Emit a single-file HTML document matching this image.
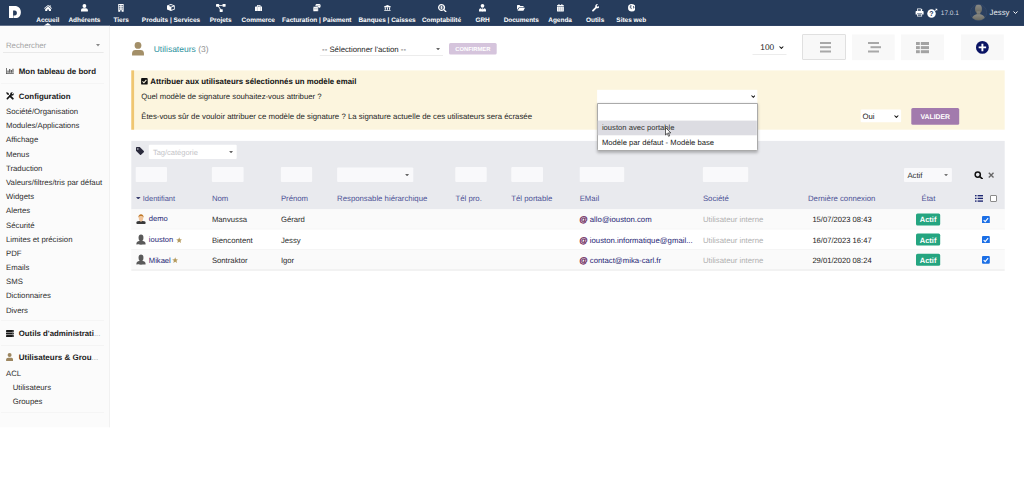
<!DOCTYPE html>
<html lang="fr"><head><meta charset="utf-8"><title>Utilisateurs</title>
<style>
html,body{margin:0;padding:0;background:#fff;}
body{text-rendering:geometricPrecision;width:1024px;height:484px;position:relative;overflow:hidden;font-family:"Liberation Sans",sans-serif;}
.t{position:absolute;white-space:pre;line-height:10px;}
.b{position:absolute;display:block;}
</style></head><body>
<svg class="b" style="left:0px;top:0px" width="1024" height="26"><rect x="0.00" y="0.00" width="1024.00" height="25.75" fill="#263c5c"/></svg>
<svg class="b" style="left:0px;top:24px" width="1024" height="2"><rect x="0.00" y="0.75" width="1024.00" height="1.00" fill="#22365a"/></svg>
<svg class="b" style="left:9.06px;top:5.90px;" width="11.9" height="12.4" viewBox="0 0 11.900 12.400"><path fill="#fff" fill-rule="evenodd" d="M0 0h5.700C9.500 0 11.900 2.500 11.900 6.200S9.500 12.400 5.700 12.400H4.500V9.400H4.100V12.400H0zM4.100 4.400V9.400H5.700C7.200 9.400 7.900 8.300 7.900 6.900S7.200 4.400 5.700 4.400z"/></svg>
<span class="t" style="left:47.75px;transform:translateX(-50%);top:16px;font-size:6.47px;color:#fff;font-weight:bold;">Accueil</span>
<svg class="b" style="left:43.75px;top:5.00px" width="8.15" height="6.30" viewBox="0 0 18 14" preserveAspectRatio="none"><g fill="#fff"><path d="M9 0 0 7.400l1 1.200L9 2.100l8 6.500 1-1.200L14.600 4.600V.8h-2.200v2z"/><path d="M9 3.600 2.600 8.800V14h4.600v-4.200h3.600V14h4.600V8.800z"/></g></svg>
<span class="t" style="left:84.40px;transform:translateX(-50%);top:16px;font-size:6.47px;color:#fff;font-weight:bold;">Adhérents</span>
<svg class="b" style="left:80.90px;top:4.40px" width="6.85" height="7.50" viewBox="0 0 14 15" preserveAspectRatio="none"><g fill="#fff"><circle cx="7" cy="3.900" r="3.900"/><path d="M0 15v-2.400c0-2.500 1.900-4 3.900-4h6.200c2 0 3.900 1.500 3.900 4V15z"/></g></svg>
<span class="t" style="left:121.10px;transform:translateX(-50%);top:16px;font-size:6.47px;color:#fff;font-weight:bold;">Tiers</span>
<svg class="b" style="left:118.10px;top:4.10px" width="5.90" height="7.80" viewBox="0 0 12 16" preserveAspectRatio="none"><g fill="#fff"><path d="M.5 0h11v16h-4v-3h-3v3h-4z"/><g fill="#263c5c"><rect x="2.500" y="2" width="2.200" height="2.200"/><rect x="7.300" y="2" width="2.200" height="2.200"/><rect x="2.500" y="5.600" width="2.200" height="2.200"/><rect x="7.300" y="5.600" width="2.200" height="2.200"/><rect x="2.500" y="9.200" width="2.200" height="2.200"/><rect x="7.300" y="9.200" width="2.200" height="2.200"/></g></g></svg>
<span class="t" style="left:171.00px;transform:translateX(-50%);top:16px;font-size:6.47px;color:#fff;font-weight:bold;">Produits | Services</span>
<svg class="b" style="left:167.25px;top:4.40px" width="7.75" height="6.90" viewBox="0 0 16 14" preserveAspectRatio="none"><g fill="#fff"><path d="M8 0 0 2.800v8.400L8 14l8-2.800V2.800z"/><path fill="#263c5c" d="M8 1.800 3 3.600 8 5.400l5-1.800zM8.900 6.900v5l5.300-1.900V5z"/></g></svg>
<span class="t" style="left:220.60px;transform:translateX(-50%);top:16px;font-size:6.47px;color:#fff;font-weight:bold;">Projets</span>
<svg class="b" style="left:216.00px;top:4.00px" width="9.60" height="7.90" viewBox="0 0 20 16" preserveAspectRatio="none"><g fill="#fff"><rect x="0" y="0" width="6.400" height="5.400" rx=".8"/><rect x="13.600" y="0" width="6.400" height="5.400" rx=".8"/><rect x="7.600" y="10.600" width="6.400" height="5.400" rx=".8"/><path d="M6 2h8v1.600H6z"/><path d="M4 4.600 5.500 3.800 10.600 11.400 9.100 12.200z"/></g></svg>
<span class="t" style="left:258.25px;transform:translateX(-50%);top:16px;font-size:6.47px;color:#fff;font-weight:bold;">Commerce</span>
<svg class="b" style="left:254.75px;top:4.75px" width="7.50" height="6.55" viewBox="0 0 16 14" preserveAspectRatio="none"><g fill="#fff"><path d="M5.500 0h5a1.300 1.300 0 0 1 1.300 1.300V3h2.700A1.500 1.500 0 0 1 16 4.500v8a1.500 1.500 0 0 1-1.500 1.500h-13A1.500 1.500 0 0 1 0 12.500v-8A1.500 1.500 0 0 1 1.500 3h2.700V1.300A1.300 1.300 0 0 1 5.500 0zm.4 1.600V3h4.200V1.600z"/><path fill="#263c5c" opacity=".45" d="M4.200 3h.9v11h-.9zM10.900 3h.9v11h-.9z"/></g></svg>
<span class="t" style="left:316.80px;transform:translateX(-50%);top:16px;font-size:6.47px;color:#fff;font-weight:bold;">Facturation | Paiement</span>
<svg class="b" style="left:313.10px;top:4.40px" width="7.50" height="7.50" viewBox="0 0 16 16" preserveAspectRatio="none"><g fill="#fff"><rect x="5.500" y="0" width="10.500" height="8" rx="2.500"/><rect x="0" y="5.500" width="11.500" height="10.500" rx="2.500" stroke="#263c5c" stroke-width="1.200"/><path fill="#263c5c" opacity=".5" d="M1.500 9.300h8.500v1H1.500zM1.500 12h8.500v1H1.500zM7 2.600h8v.9H7z"/></g></svg>
<span class="t" style="left:387.00px;transform:translateX(-50%);top:16px;font-size:6.47px;color:#fff;font-weight:bold;">Banques | Caisses</span>
<svg class="b" style="left:383.75px;top:5.00px" width="6.85" height="6.30" viewBox="0 0 16 14" preserveAspectRatio="none"><g fill="#fff"><path d="M8 0 0 3.300v1.500h16V3.300zM1.800 5.600h2.400v5H1.800zM6.800 5.600h2.400v5H6.800zM11.800 5.600h2.400v5h-2.400zM.8 11.200h14.400v1.200H.8zM0 12.800h16V14H0z"/></g></svg>
<span class="t" style="left:441.50px;transform:translateX(-50%);top:16px;font-size:6.47px;color:#fff;font-weight:bold;">Comptabilité</span>
<svg class="b" style="left:437.50px;top:3.75px" width="9.00" height="8.50" viewBox="0 0 18 17" preserveAspectRatio="none"><g fill="#fff"><path d="M7 0a7 7 0 1 0 4.100 12.700l4.300 4.300 1.900-1.900-4.300-4.300A7 7 0 0 0 7 0zm0 2.600a4.400 4.400 0 1 1 0 8.800A4.400 4.400 0 0 1 7 2.600z"/><path d="M6.400 3.300h1.200v7.400H6.400z"/><path d="M5.200 4.600h3.600v1.200H5.200zM5.200 8.200h3.600v1.200H5.200zM5.200 4.600h1.200v3.400H5.200zM7.600 6.200h1.200v3.200H7.600zM5.200 6.400h3.600v1.200H5.200z"/></g></svg>
<span class="t" style="left:482.60px;transform:translateX(-50%);top:16px;font-size:6.47px;color:#fff;font-weight:bold;">GRH</span>
<svg class="b" style="left:479.00px;top:4.40px" width="7.00" height="7.50" viewBox="0 0 14 15" preserveAspectRatio="none"><g fill="#fff"><circle cx="7" cy="3.700" r="3.700"/><path d="M0 15v-2.300c0-2.400 1.700-4 3.800-4.100L7 12l3.200-3.400c2.100.1 3.800 1.700 3.800 4.100V15z"/><path d="M6 8.600h2l-.4 1.500.9 3.400L7 14.800l-1.500-1.300.9-3.400z"/></g></svg>
<span class="t" style="left:521.25px;transform:translateX(-50%);top:16px;font-size:6.47px;color:#fff;font-weight:bold;">Documents</span>
<svg class="b" style="left:517.25px;top:5.25px" width="8.00" height="5.75" viewBox="0 0 18 13" preserveAspectRatio="none"><g fill="#fff"><path d="M0 1.500A1.500 1.500 0 0 1 1.500 0h4l2 2h6A1.500 1.500 0 0 1 15 3.500V5H5.200a2 2 0 0 0-1.700 1L0 11.500z"/><path d="M5.300 6H18l-3.300 6.200a1.500 1.500 0 0 1-1.300.8H1z"/></g></svg>
<span class="t" style="left:560.10px;transform:translateX(-50%);top:16px;font-size:6.47px;color:#fff;font-weight:bold;">Agenda</span>
<svg class="b" style="left:556.90px;top:4.40px" width="6.85" height="7.50" viewBox="0 0 14 16" preserveAspectRatio="none"><g fill="#fff"><path d="M0 3.300A1.300 1.300 0 0 1 1.300 2h11.400A1.300 1.300 0 0 1 14 3.300V5H0zM0 6h14v8.700a1.300 1.300 0 0 1-1.300 1.300H1.300A1.300 1.300 0 0 1 0 14.700z"/><rect x="3" y="0" width="2" height="3.600" rx=".6"/><rect x="9" y="0" width="2" height="3.600" rx=".6"/><g fill="#263c5c" opacity=".35"><rect x="2" y="7.400" width="2.600" height="2.600"/><rect x="5.700" y="7.400" width="2.600" height="2.600"/><rect x="9.400" y="7.400" width="2.600" height="2.600"/><rect x="2" y="11.400" width="2.600" height="2.600"/><rect x="5.700" y="11.400" width="2.600" height="2.600"/><rect x="9.400" y="11.400" width="2.600" height="2.600"/></g></g></svg>
<span class="t" style="left:595.10px;transform:translateX(-50%);top:16px;font-size:6.47px;color:#fff;font-weight:bold;">Outils</span>
<svg class="b" style="left:591.90px;top:4.40px" width="7.50" height="7.50" viewBox="0 0 16 16" preserveAspectRatio="none"><g fill="#fff"><path d="M16 4.600a4.600 4.600 0 0 1-6.200 4.300l-6.400 6.400a1.900 1.900 0 0 1-2.700-2.700l6.400-6.400A4.600 4.600 0 0 1 12.800.3L10.100 3l.5 2.400 2.400.5 2.700-2.700c.2.400.3.900.3 1.400z"/></g></svg>
<span class="t" style="left:631.25px;transform:translateX(-50%);top:16px;font-size:6.47px;color:#fff;font-weight:bold;">Sites web</span>
<svg class="b" style="left:627.75px;top:4.40px" width="7.50" height="7.50" viewBox="0 0 16 16" preserveAspectRatio="none"><g fill="#fff"><circle cx="8" cy="8" r="8"/><path fill="#263c5c" opacity=".85" d="M4.500 3.300 6.500 2.600l1.500 1.100-.7 1.400-1.600.3-.5 1.300 1.800.5 1 1.700-.8 2.500-1.500-1.700-.9-1.100-1.400-1.800zM10.800 4.500l1.900.4 1.100 1.900-.9 2.300-1.700.4-.5-1.600.9-1.200-1.100-.7z"/></g></svg>
<svg class="b" style="left:43.70px;top:23.30px;" width="7.6" height="2.6" viewBox="0 0 15.200 5.200"><path fill="#fbfbfb" d="M0 5.200 7.600 0l7.600 5.200z"/></svg>
<svg class="b" style="left:914.60px;top:8.00px;" width="9.2" height="9" viewBox="0 0 18 18"><g fill="#fff"><path d="M4 1h8l2 2v4H4z"/><path d="M1 7.500a1.500 1.500 0 0 1 1.500-1.500h13A1.500 1.500 0 0 1 17 7.500V13h-3v-2H4v2H1z"/><path d="M4 12h10v5H4z"/></g><path fill="#263c5c" d="M5.500 2.500h6v3h-6zM5.500 13.200h7v2.400h-7z"/></svg>
<svg class="b" style="left:927.00px;top:7.60px;" width="10.5" height="10" viewBox="0 0 21 20"><circle cx="9" cy="11" r="8.500" fill="#fff"/><path fill="#fff" d="M16.500 1.500h4v4l-1.300-1.300-1.700 1.700-1.400-1.400 1.700-1.700z"/><text x="9" y="16" font-family="Liberation Sans" font-weight="bold" font-size="14" text-anchor="middle" fill="#263c5c">?</text></svg>
<span class="t" style="left:940.80px;top:9px;font-size:6.5px;color:#d3d8e0;">17.0.1</span>
<svg class="b" style="left:970.00px;top:4.20px;" width="17" height="17" viewBox="0 0 34 34"><defs><clipPath id="av"><circle cx="17" cy="17" r="16.500"/></clipPath><linearGradient id="avg" x1="0" y1="0" x2="0" y2="1"><stop offset="0" stop-color="#8b8b86"/><stop offset="1" stop-color="#6a695f"/></linearGradient></defs><circle cx="17" cy="17" r="16.500" fill="#2a3f5f"/><g clip-path="url(#av)" fill="url(#avg)"><ellipse cx="17" cy="9.800" rx="6.800" ry="8.600"/><path d="M13.500 15h7v6.500h-7z"/><path d="M3 33c0-7.500 5-11 10.500-12.500h7C26 22 31 25.500 31 33z"/></g><circle cx="17" cy="17" r="16.300" fill="none" stroke="#435573" stroke-width="0.800"/></svg>
<span class="t" style="left:989.60px;top:8px;font-size:7.78px;color:#e8ebf0;">Jessy</span>
<svg class="b" style="left:1013.00px;top:11.00px;" width="5" height="3.2" viewBox="0 0 10 6.400"><path d="M1 1l4 4 4-4" fill="none" stroke="#fff" stroke-width="2"/></svg>
<svg class="b" style="left:0px;top:25px" width="110" height="403"><rect x="0.00" y="0.75" width="109.70" height="401.55" fill="#fbfbfb"/></svg>
<svg class="b" style="left:109px;top:25px" width="1" height="403"><rect x="0.10" y="0.75" width="0.70" height="401.55" fill="#ececec"/></svg>
<span class="t" style="left:6.00px;top:41px;font-size:7.78px;color:#a4a4a4;">Rechercher</span>
<svg class="b" style="left:95.50px;top:44.30px;" width="4" height="2.4" viewBox="0 0 8 4.800"><path d="M0 0h8L4 4.800z" fill="#888"/></svg>
<svg class="b" style="left:3px;top:52px" width="101" height="1"><rect x="0.00" y="0.10" width="100.60" height="0.60" fill="#dedede"/></svg>
<svg class="b" style="left:6.00px;top:68.10px;" width="7.8" height="6" viewBox="0 0 16 12"><path fill="#555" d="M0 0h1.600v10.400H16V12H0z"/><path fill="#555" d="M3 5h2.400v4.600H3zM6.400 2h2.400v7.600H6.400zM9.800 4h2.400v5.600H9.800zM13.200 1.500h2.200v8.100h-2.200z"/></svg>
<span class="t" style="left:18.80px;top:67px;font-size:7.9px;color:#1a1a1a;font-weight:bold;">Mon tableau de bord</span>
<svg class="b" style="left:1px;top:83px" width="103" height="2"><rect x="0.00" y="0.35" width="103.00" height="0.70" fill="#f1f1f1"/></svg>
<svg class="b" style="left:6.00px;top:91.90px;" width="8" height="7.9" viewBox="0 0 16 16"><g stroke="#161616" stroke-linecap="round" fill="none"><path d="M2.600 13.400 10.800 5.200" stroke-width="3.200"/><path d="M9.300 9.300 13.600 13.600" stroke-width="3.800"/><path d="M2.200 2.200 8.500 8.500" stroke-width="1.500"/></g><g fill="#161616"><circle cx="12" cy="4" r="3.700"/><path d="M0.300 1.700 1.700.3l3.400 1.900.5 2.100-1.400 1.400-2.100-.5z"/></g><path d="M12.400 3.600 16.500-.5" stroke="#fbfbfb" stroke-width="2.200"/></svg>
<span class="t" style="left:18.80px;top:92px;font-size:7.9px;color:#1a1a1a;font-weight:bold;">Configuration</span>
<span class="t" style="left:6.00px;top:107px;font-size:7.78px;color:#2e2e2e;">Société/Organisation</span>
<span class="t" style="left:6.00px;top:121px;font-size:7.78px;color:#2e2e2e;">Modules/Applications</span>
<span class="t" style="left:6.00px;top:135px;font-size:7.78px;color:#2e2e2e;">Affichage</span>
<span class="t" style="left:6.00px;top:150px;font-size:7.78px;color:#2e2e2e;">Menus</span>
<span class="t" style="left:6.00px;top:164px;font-size:7.78px;color:#2e2e2e;">Traduction</span>
<span class="t" style="left:6.00px;top:178px;font-size:7.78px;color:#2e2e2e;">Valeurs/filtres/tris par défaut</span>
<span class="t" style="left:6.00px;top:192px;font-size:7.78px;color:#2e2e2e;">Widgets</span>
<span class="t" style="left:6.00px;top:206px;font-size:7.78px;color:#2e2e2e;">Alertes</span>
<span class="t" style="left:6.00px;top:221px;font-size:7.78px;color:#2e2e2e;">Sécurité</span>
<span class="t" style="left:6.00px;top:235px;font-size:7.78px;color:#2e2e2e;">Limites et précision</span>
<span class="t" style="left:6.00px;top:249px;font-size:7.78px;color:#2e2e2e;">PDF</span>
<span class="t" style="left:6.00px;top:263px;font-size:7.78px;color:#2e2e2e;">Emails</span>
<span class="t" style="left:6.00px;top:277px;font-size:7.78px;color:#2e2e2e;">SMS</span>
<span class="t" style="left:6.00px;top:291px;font-size:7.78px;color:#2e2e2e;">Dictionnaires</span>
<span class="t" style="left:6.00px;top:306px;font-size:7.78px;color:#2e2e2e;">Divers</span>
<svg class="b" style="left:1px;top:320px" width="103" height="2"><rect x="0.00" y="0.35" width="103.00" height="0.70" fill="#f1f1f1"/></svg>
<svg class="b" style="left:6.00px;top:329.50px;" width="7.8" height="7" viewBox="0 0 16 14"><g fill="#1a1a1a"><rect x="0" y="0" width="16" height="3.800" rx=".8"/><rect x="0" y="5.100" width="16" height="3.800" rx=".8"/><rect x="0" y="10.200" width="16" height="3.800" rx=".8"/></g><g fill="#fbfbfb"><circle cx="13.500" cy="1.900" r=".7"/><circle cx="13.500" cy="7" r=".7"/><circle cx="13.500" cy="12.100" r=".7"/></g></svg>
<span class="t" style="left:18.80px;top:329px;font-size:7.8px;color:#1a1a1a;font-weight:bold;">Outils d'administrati<span style='color:#aaa;font-weight:normal'>...</span></span>
<svg class="b" style="left:1px;top:345px" width="103" height="1"><rect x="0.00" y="0.15" width="103.00" height="0.70" fill="#f1f1f1"/></svg>
<svg class="b" style="left:6.30px;top:353.00px;" width="7.2" height="8" viewBox="0 0 14 16"><g fill="#9c8660"><circle cx="7" cy="4" r="4"/><path d="M0 16v-2.800C0 10.800 2 9.300 4 9.300h6c2 0 4 1.500 4 3.900V16z"/></g></svg>
<span class="t" style="left:18.70px;top:353px;font-size:8.0px;color:#1a1a1a;font-weight:bold;">Utilisateurs &amp; Grou<span style='color:#aaa;font-weight:normal'>...</span></span>
<span class="t" style="left:6.00px;top:369px;font-size:7.78px;color:#2e2e2e;">ACL</span>
<span class="t" style="left:12.65px;top:383px;font-size:7.78px;color:#2e2e2e;">Utilisateurs</span>
<span class="t" style="left:12.65px;top:397px;font-size:7.78px;color:#2e2e2e;">Groupes</span>
<svg class="b" style="left:1px;top:411px" width="103" height="2"><rect x="0.00" y="0.95" width="103.00" height="0.70" fill="#f1f1f1"/></svg>
<svg class="b" style="left:131.70px;top:42.20px;" width="12" height="13.4" viewBox="0 0 24 27"><g fill="#a38f68"><circle cx="12" cy="7" r="6.800"/><path d="M0 27v-4.500c0-4 3-6.500 6.500-6.500h11c3.500 0 6.500 2.500 6.500 6.500V27z"/></g></svg>
<span class="t" style="left:153.70px;top:44px;font-size:8.53px;color:#2c929e;">Utilisateurs <span style="color:#8f8f8f">(3)</span></span>
<span class="t" style="left:322.10px;top:45px;font-size:7.78px;color:#1e1e1e;">-- Sélectionner l'action --</span>
<svg class="b" style="left:436.00px;top:47.90px;" width="4.2" height="2.4" viewBox="0 0 8 4.800"><path d="M0 0h8L4 4.800z" fill="#666"/></svg>
<svg class="b" style="left:319px;top:55px" width="124" height="1"><rect x="0.80" y="0.40" width="123.20" height="0.60" fill="#dfdfdf"/></svg>
<svg class="b" style="left:449px;top:42px" width="48" height="13"><rect x="0.00" y="0.90" width="47.70" height="11.70" rx="1.50" fill="#d5c4dc"/></svg>
<span class="t" style="left:472.85px;transform:translateX(-50%);top:45px;font-size:5.8px;color:#fff;font-weight:bold;">CONFIRMER</span>
<span class="t" style="left:760.30px;top:42px;font-size:8.3px;color:#222;">100</span>
<svg class="b" style="left:779.00px;top:45.60px;" width="4.8" height="3" viewBox="0 0 9.600 6"><path d="M1 1l3.800 3.800L8.600 1" fill="none" stroke="#111" stroke-width="2.100"/></svg>
<svg class="b" style="left:752px;top:54px" width="35" height="1"><rect x="0.50" y="0.10" width="34.00" height="0.60" fill="#e0e0e0"/></svg>
<div class="b" style="left:802.20px;top:34.20px;width:43.80px;height:26.20px;background:#f8f8f8;border:0.600px solid #e0e0e0;box-sizing:border-box;border-radius:1px"></div>
<svg class="b" style="left:820px;top:42px" width="11" height="2"><rect x="0.00" y="0.00" width="11.00" height="2.00" fill="#a8a8a8"/></svg>
<svg class="b" style="left:820px;top:46px" width="11" height="3"><rect x="0.00" y="0.20" width="11.00" height="2.00" fill="#a8a8a8"/></svg>
<svg class="b" style="left:820px;top:50px" width="11" height="3"><rect x="0.00" y="0.50" width="11.00" height="2.00" fill="#a8a8a8"/></svg>
<svg class="b" style="left:852px;top:34px" width="43" height="27"><rect x="0.00" y="0.50" width="42.70" height="25.70" fill="#f8f8f8"/></svg>
<svg class="b" style="left:868px;top:42px" width="11" height="2"><rect x="0.00" y="0.00" width="11.00" height="2.00" fill="#a8a8a8"/></svg>
<svg class="b" style="left:870px;top:46px" width="11" height="3"><rect x="0.50" y="0.20" width="10.50" height="2.00" fill="#a8a8a8"/></svg>
<svg class="b" style="left:868px;top:50px" width="11" height="3"><rect x="0.00" y="0.50" width="11.00" height="2.00" fill="#a8a8a8"/></svg>
<svg class="b" style="left:901px;top:34px" width="43" height="27"><rect x="0.00" y="0.50" width="43.00" height="25.70" fill="#f8f8f8"/></svg>
<svg class="b" style="left:916px;top:42px" width="4" height="3"><rect x="0.00" y="0.00" width="3.80" height="3.00" fill="#a3a3a3"/></svg>
<svg class="b" style="left:920px;top:42px" width="9" height="3"><rect x="0.80" y="0.00" width="8.20" height="3.00" fill="#a3a3a3"/></svg>
<svg class="b" style="left:916px;top:46px" width="4" height="4"><rect x="0.00" y="0.10" width="3.80" height="3.00" fill="#a3a3a3"/></svg>
<svg class="b" style="left:920px;top:46px" width="9" height="4"><rect x="0.80" y="0.10" width="8.20" height="3.00" fill="#a3a3a3"/></svg>
<svg class="b" style="left:916px;top:50px" width="4" height="4"><rect x="0.00" y="0.20" width="3.80" height="3.00" fill="#a3a3a3"/></svg>
<svg class="b" style="left:920px;top:50px" width="9" height="4"><rect x="0.80" y="0.20" width="8.20" height="3.00" fill="#a3a3a3"/></svg>
<svg class="b" style="left:961px;top:34px" width="43" height="27"><rect x="0.00" y="0.50" width="42.75" height="25.70" fill="#f8f8f8"/></svg>
<svg class="b" style="left:976.00px;top:41.00px;" width="12.8" height="12.8" viewBox="0 0 24 24"><circle cx="12" cy="12" r="12" fill="#0a1464"/><path fill="#fff" d="M10.200 5h3.600v5.200H19v3.600h-5.200V19h-3.600v-5.200H5v-3.600h5.200z"/></svg>
<svg class="b" style="left:131px;top:70px" width="874" height="60"><rect x="0.30" y="0.40" width="873.40" height="59.30" fill="#fcf5de"/></svg>
<svg class="b" style="left:131px;top:70px" width="4" height="60"><rect x="0.30" y="0.40" width="2.80" height="59.30" fill="#efc672"/></svg>
<svg class="b" style="left:141.20px;top:78.30px;" width="6.8" height="6.6" viewBox="0 0 14 14"><rect width="14" height="14" rx="2" fill="#111"/><path d="M3 7.200 6 10.200 11.200 4" fill="none" stroke="#fcf6e1" stroke-width="2.200"/></svg>
<span class="t" style="left:150.25px;top:77px;font-size:7.85px;color:#111;font-weight:bold;">Attribuer aux utilisateurs sélectionnés un modèle email</span>
<span class="t" style="left:141.20px;top:92px;font-size:7.78px;color:#262626;">Quel modèle de signature souhaitez-vous attribuer ?</span>
<span class="t" style="left:141.20px;top:112px;font-size:7.82px;color:#262626;">Êtes-vous sûr de vouloir attribuer ce modèle de signature ? La signature actuelle de ces utilisateurs sera écrasée</span>
<svg class="b" style="left:597px;top:89px" width="161" height="15"><rect x="0.10" y="0.80" width="160.20" height="13.60" fill="#fff"/></svg>
<svg class="b" style="left:750.60px;top:95.20px;" width="4.6" height="2.9" viewBox="0 0 9.200 5.800"><path d="M1 1l3.600 3.600L8.200 1" fill="none" stroke="#111" stroke-width="2.100"/></svg>
<svg class="b" style="left:860px;top:109px" width="42" height="14"><rect x="0.70" y="0.50" width="40.40" height="12.70" rx="1.00" fill="#fff"/></svg>
<span class="t" style="left:862.50px;top:112px;font-size:7.78px;color:#222;">Oui</span>
<svg class="b" style="left:894.00px;top:114.60px;" width="4.8" height="3" viewBox="0 0 9.600 6"><path d="M1 1l3.800 3.800L8.600 1" fill="none" stroke="#111" stroke-width="2.100"/></svg>
<svg class="b" style="left:911px;top:108px" width="49" height="17"><rect x="0.30" y="0.00" width="47.90" height="16.80" rx="1.50" fill="#a27aad"/></svg>
<span class="t" style="left:935.25px;transform:translateX(-50%);top:113px;font-size:6.86px;color:#fff;font-weight:bold;">VALIDER</span>
<svg class="b" style="left:131px;top:140px" width="874" height="70"><rect x="0.30" y="0.90" width="873.40" height="68.50" fill="#e9eaee"/></svg>
<svg class="b" style="left:136.10px;top:147.40px;" width="8" height="8.2" viewBox="0 0 16 16"><path fill="#2a2a3c" d="M0 1.500A1.500 1.500 0 0 1 1.500 0h6l8 8a1.500 1.500 0 0 1 0 2.100l-5.400 5.400a1.500 1.500 0 0 1-2.100 0L0 7.500z"/><circle cx="3.700" cy="3.700" r="1.400" fill="#e9eaef"/></svg>
<svg class="b" style="left:148px;top:144px" width="89" height="16"><rect x="0.80" y="0.80" width="87.90" height="14.30" rx="1.00" fill="#fff"/></svg>
<span class="t" style="left:152.90px;top:148px;font-size:7.5px;color:#c4c4c8;">Tag/catégorie</span>
<svg class="b" style="left:228.50px;top:151.00px;" width="4.2" height="2.4" viewBox="0 0 8 4.800"><path d="M0 0h8L4 4.800z" fill="#666"/></svg>
<svg class="b" style="left:135px;top:166px" width="32" height="16"><rect x="0.70" y="0.90" width="31.30" height="15.10" rx="1.00" fill="#f9f9fb"/></svg>
<svg class="b" style="left:211px;top:166px" width="33" height="16"><rect x="0.90" y="0.90" width="31.70" height="15.10" rx="1.00" fill="#f9f9fb"/></svg>
<svg class="b" style="left:280px;top:166px" width="33" height="16"><rect x="0.90" y="0.90" width="31.20" height="15.10" rx="1.00" fill="#f9f9fb"/></svg>
<svg class="b" style="left:455px;top:166px" width="32" height="16"><rect x="0.30" y="0.90" width="31.40" height="15.10" rx="1.00" fill="#f9f9fb"/></svg>
<svg class="b" style="left:511px;top:166px" width="32" height="16"><rect x="0.30" y="0.90" width="31.70" height="15.10" rx="1.00" fill="#f9f9fb"/></svg>
<svg class="b" style="left:579px;top:166px" width="46" height="16"><rect x="0.70" y="0.90" width="44.50" height="15.10" rx="1.00" fill="#f9f9fb"/></svg>
<svg class="b" style="left:702px;top:166px" width="47" height="16"><rect x="0.90" y="0.90" width="45.30" height="15.10" rx="1.00" fill="#f9f9fb"/></svg>
<svg class="b" style="left:337px;top:167px" width="77" height="15"><rect x="0.10" y="0.40" width="76.20" height="14.50" rx="1.00" fill="#f9f9fb"/></svg>
<svg class="b" style="left:405.40px;top:173.60px;" width="4.2" height="2.4" viewBox="0 0 8 4.800"><path d="M0 0h8L4 4.800z" fill="#666"/></svg>
<svg class="b" style="left:904px;top:167px" width="48" height="16"><rect x="0.00" y="0.90" width="47.90" height="14.20" rx="1.00" fill="#f9f9fb"/></svg>
<span class="t" style="left:907.40px;top:171px;font-size:7.78px;color:#333;">Actif</span>
<svg class="b" style="left:943.80px;top:173.80px;" width="4.2" height="2.4" viewBox="0 0 8 4.800"><path d="M0 0h8L4 4.800z" fill="#777"/></svg>
<svg class="b" style="left:973.60px;top:170.80px;" width="9.5" height="8.6" viewBox="0 0 19 17"><circle cx="7.500" cy="7" r="5.200" fill="none" stroke="#111" stroke-width="3"/><path d="M11 10.500l5.500 5" stroke="#111" stroke-width="3.400" stroke-linecap="round"/></svg>
<svg class="b" style="left:987.50px;top:171.80px;" width="6.3" height="6.3" viewBox="0 0 12 12"><path d="M1.500 1.500l9 9M10.500 1.500l-9 9" stroke="#666" stroke-width="2.600"/></svg>
<svg class="b" style="left:136.00px;top:196.70px;" width="4.6" height="2.7" viewBox="0 0 8 4.800"><path d="M0 0h8L4 4.800z" fill="#3c4170"/></svg>
<span class="t" style="left:142.80px;top:194px;font-size:7.45px;color:#4d5296;">Identifiant</span>
<span class="t" style="left:211.90px;top:194px;font-size:7.78px;color:#4d5296;">Nom</span>
<span class="t" style="left:280.90px;top:194px;font-size:7.78px;color:#4d5296;">Prénom</span>
<span class="t" style="left:337.10px;top:194px;font-size:7.78px;color:#4d5296;">Responsable hiérarchique</span>
<span class="t" style="left:455.50px;top:194px;font-size:7.78px;color:#4d5296;">Tél pro.</span>
<span class="t" style="left:511.30px;top:194px;font-size:7.78px;color:#4d5296;">Tél portable</span>
<span class="t" style="left:579.70px;top:194px;font-size:7.78px;color:#4d5296;">EMail</span>
<span class="t" style="left:702.90px;top:194px;font-size:7.78px;color:#4d5296;">Société</span>
<span class="t" style="left:841.70px;transform:translateX(-50%);top:194px;font-size:7.78px;color:#4d5296;">Dernière connexion</span>
<span class="t" style="left:928.40px;transform:translateX(-50%);top:194px;font-size:7.78px;color:#4d5296;">État</span>
<svg class="b" style="left:974.80px;top:194.80px;" width="8.3" height="6.8" viewBox="0 0 16 13"><g fill="#1a2370"><rect x="0" y="0" width="3" height="2.600"/><rect x="5" y="0" width="11" height="2.600"/><rect x="0" y="5.200" width="3" height="2.600"/><rect x="5" y="5.200" width="11" height="2.600"/><rect x="0" y="10.400" width="3" height="2.600"/><rect x="5" y="10.400" width="11" height="2.600"/></g></svg>
<div class="b" style="left:990.00px;top:195.00px;width:7.00px;height:7.00px;background:#fff;border:0.700px solid #8a8a8a;box-sizing:border-box;border-radius:1px"></div>
<svg class="b" style="left:131px;top:209px" width="874" height="21"><rect x="0.30" y="0.40" width="873.40" height="20.10" fill="#fafafa"/></svg>
<svg class="b" style="left:131px;top:228px" width="874" height="2"><rect x="0.30" y="0.80" width="873.40" height="0.70" fill="#eeeeee"/></svg>
<svg class="b" style="left:136.10px;top:213.70px;" width="10" height="10.8" viewBox="0 0 20 22"><ellipse cx="10" cy="18" rx="9.500" ry="4" fill="#3a3a3a"/><path d="M5.500 8c0 4 2 7.500 4.500 7.500S14.500 12 14.500 8 12.500 2 10 2 5.500 4 5.500 8z" fill="#f0c49a"/><path d="M4.800 8C4 3 7 .5 10 .5S16 3 15.200 8C14.500 5 13 4 10 4S5.500 5 4.800 8z" fill="#c07a2a"/></svg>
<span class="t" style="left:148.80px;top:214px;font-size:7.62px;color:#1f2675;">demo</span>
<span class="t" style="left:211.90px;top:215px;font-size:7.73px;color:#2d2d2d;">Manvussa</span>
<span class="t" style="left:280.90px;top:215px;font-size:7.73px;color:#2d2d2d;">Gérard</span>
<span class="t" style="left:579.50px;top:215px;font-size:8.2px;color:#6e2a5e;font-weight:bold;-webkit-text-stroke:0.350px #6e2a5e;">@</span>
<span class="t" style="left:589.80px;top:215px;font-size:7.78px;color:#1f2675;">allo@iouston.com</span>
<span class="t" style="left:702.90px;top:215px;font-size:7.78px;color:#b0b0b0;">Utilisateur interne</span>
<span class="t" style="left:842.00px;transform:translateX(-50%);top:215px;font-size:7.62px;color:#1e1e1e;">15/07/2023 08:43</span>
<svg class="b" style="left:916px;top:213px" width="25" height="13"><rect x="0.00" y="0.50" width="24.20" height="12.00" rx="1.60" fill="#25a580"/></svg>
<span class="t" style="left:928.10px;transform:translateX(-50%);top:215px;font-size:7.47px;color:#fff;font-weight:bold;">Actif</span>
<svg class="b" style="left:982.10px;top:215.50px;" width="7.8" height="7.8" viewBox="0 0 14 14"><rect width="14" height="14" rx="2" fill="#1b6fe6"/><path d="M3 7.300 5.800 10 11 4" fill="none" stroke="#fff" stroke-width="2"/></svg>
<svg class="b" style="left:131px;top:229px" width="874" height="21"><rect x="0.30" y="0.50" width="873.40" height="20.20" fill="#fff"/></svg>
<svg class="b" style="left:131px;top:249px" width="874" height="1"><rect x="0.30" y="0.00" width="873.40" height="0.70" fill="#eeeeee"/></svg>
<svg class="b" style="left:136.10px;top:233.80px;" width="10" height="10.8" viewBox="0 0 20 22"><g fill="#5a5a5a"><ellipse cx="10" cy="7.500" rx="5" ry="6.500"/><path d="M.5 21c0-4.500 3-6 6.500-7l1-2h4l1 2c3.500 1 6.500 2.500 6.500 7 0 1-19 1-19 0z"/></g></svg>
<span class="t" style="left:148.80px;top:235px;font-size:7.62px;color:#1f2675;">iouston</span>
<svg class="b" style="left:175.80px;top:237.10px;" width="6.4" height="6.4" viewBox="0 0 10 10"><polygon fill="#b49a5c" points="5.00,0.30 6.23,3.60 9.76,3.75 7.00,5.95 7.94,9.35 5.00,7.40 2.06,9.35 3.00,5.95 0.24,3.75 3.77,3.60"/></svg>
<span class="t" style="left:211.90px;top:236px;font-size:7.73px;color:#2d2d2d;">Biencontent</span>
<span class="t" style="left:280.90px;top:236px;font-size:7.73px;color:#2d2d2d;">Jessy</span>
<span class="t" style="left:579.50px;top:236px;font-size:8.2px;color:#6e2a5e;font-weight:bold;-webkit-text-stroke:0.350px #6e2a5e;">@</span>
<span class="t" style="left:589.80px;top:236px;font-size:7.78px;color:#1f2675;">iouston.informatique@gmail...</span>
<span class="t" style="left:702.90px;top:236px;font-size:7.78px;color:#b0b0b0;">Utilisateur interne</span>
<span class="t" style="left:842.00px;transform:translateX(-50%);top:236px;font-size:7.62px;color:#1e1e1e;">16/07/2023 16:47</span>
<svg class="b" style="left:916px;top:233px" width="25" height="13"><rect x="0.00" y="0.60" width="24.20" height="12.00" rx="1.60" fill="#25a580"/></svg>
<span class="t" style="left:928.10px;transform:translateX(-50%);top:236px;font-size:7.47px;color:#fff;font-weight:bold;">Actif</span>
<svg class="b" style="left:982.10px;top:235.60px;" width="7.8" height="7.8" viewBox="0 0 14 14"><rect width="14" height="14" rx="2" fill="#1b6fe6"/><path d="M3 7.300 5.800 10 11 4" fill="none" stroke="#fff" stroke-width="2"/></svg>
<svg class="b" style="left:131px;top:249px" width="874" height="22"><rect x="0.30" y="0.70" width="873.40" height="20.70" fill="#fafafa"/></svg>
<svg class="b" style="left:131px;top:269px" width="874" height="2"><rect x="0.30" y="0.70" width="873.40" height="0.70" fill="#e0e0e0"/></svg>
<svg class="b" style="left:136.10px;top:254.00px;" width="10" height="10.8" viewBox="0 0 20 22"><g fill="#5a5a5a"><ellipse cx="10" cy="7.500" rx="5" ry="6.500"/><path d="M.5 21c0-4.500 3-6 6.500-7l1-2h4l1 2c3.500 1 6.500 2.500 6.500 7 0 1-19 1-19 0z"/></g></svg>
<span class="t" style="left:148.80px;top:256px;font-size:7.62px;color:#1f2675;">Mikael</span>
<svg class="b" style="left:172.00px;top:257.30px;" width="6.4" height="6.4" viewBox="0 0 10 10"><polygon fill="#b49a5c" points="5.00,0.30 6.23,3.60 9.76,3.75 7.00,5.95 7.94,9.35 5.00,7.40 2.06,9.35 3.00,5.95 0.24,3.75 3.77,3.60"/></svg>
<span class="t" style="left:211.90px;top:256px;font-size:7.73px;color:#2d2d2d;">Sontraktor</span>
<span class="t" style="left:280.90px;top:256px;font-size:7.73px;color:#2d2d2d;">Igor</span>
<span class="t" style="left:579.50px;top:256px;font-size:8.2px;color:#6e2a5e;font-weight:bold;-webkit-text-stroke:0.350px #6e2a5e;">@</span>
<span class="t" style="left:589.80px;top:256px;font-size:7.78px;color:#1f2675;">contact@mika-carl.fr</span>
<span class="t" style="left:702.90px;top:256px;font-size:7.78px;color:#b0b0b0;">Utilisateur interne</span>
<span class="t" style="left:842.00px;transform:translateX(-50%);top:256px;font-size:7.62px;color:#1e1e1e;">29/01/2020 08:24</span>
<svg class="b" style="left:916px;top:253px" width="25" height="13"><rect x="0.00" y="0.80" width="24.20" height="12.00" rx="1.60" fill="#25a580"/></svg>
<span class="t" style="left:928.10px;transform:translateX(-50%);top:256px;font-size:7.47px;color:#fff;font-weight:bold;">Actif</span>
<svg class="b" style="left:982.10px;top:255.80px;" width="7.8" height="7.8" viewBox="0 0 14 14"><rect width="14" height="14" rx="2" fill="#1b6fe6"/><path d="M3 7.300 5.800 10 11 4" fill="none" stroke="#fff" stroke-width="2"/></svg>
<div class="b" style="left:597.00px;top:103.40px;width:160.50px;height:47.90px;background:#fff;border:0.700px solid #aaa;box-sizing:border-box;box-shadow:0 1.500px 3px rgba(0,0,0,.25);border-radius:0 0 1.500px 1.500px"></div>
<svg class="b" style="left:597px;top:120px" width="160" height="16"><rect x="0.70" y="0.60" width="159.10" height="14.70" fill="#dcdce2"/></svg>
<span class="t" style="left:601.90px;top:123px;font-size:7.65px;color:#333;">iouston avec portable</span>
<span class="t" style="left:601.90px;top:138px;font-size:7.65px;color:#222;">Modèle par défaut - Modèle base</span>
<svg class="b" style="left:664.50px;top:126.80px;" width="6" height="10" viewBox="0 0 12 20"><path d="M1 1v15l3.600-3.400 2.500 6 2.300-1-2.500-5.800H11.600z" fill="#fff" stroke="#111" stroke-width="1.300" stroke-linejoin="round"/></svg>
</body></html>
